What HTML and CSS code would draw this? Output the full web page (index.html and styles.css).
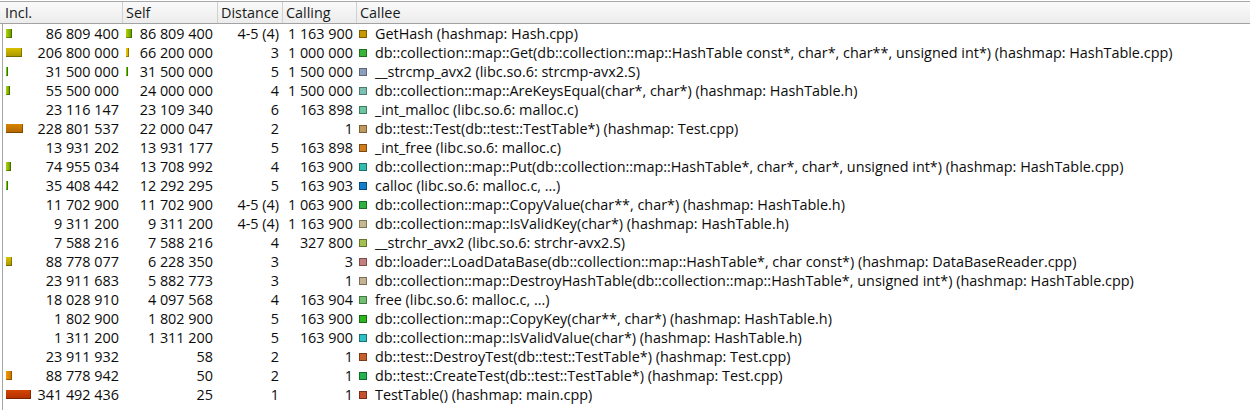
FILE: index.html
```html
<!DOCTYPE html>
<html>
<head>
<meta charset="utf-8">
<link rel="stylesheet" href="styles.css">
</head>
<body>
<div class="view">
  <div class="head">
    <div class="hc hc-incl">Incl.</div>
    <div class="hc">Self</div>
    <div class="hc">Distance</div>
    <div class="hc">Calling</div>
    <div class="hc">Callee</div>
  </div>
  <div class="rows">
    <div class="row">
      <div class="c incl"><span class="bar b-yg" style="width:6px"></span><span class="n">86 809 400</span></div>
      <div class="c self"><span class="bar b-yg" style="width:6px"></span><span class="n">86 809 400</span></div>
      <div class="c dist">4-5 (4)</div>
      <div class="c call">1 163 900</div>
      <div class="c callee"><span class="sq" style="background:#c49a00;border-color:#7a5f00"></span>GetHash (hashmap: Hash.cpp)</div>
    </div>
    <div class="row">
      <div class="c incl"><span class="bar b-ol" style="width:16px"></span><span class="n">206 800 000</span></div>
      <div class="c self"><span class="bar b-ye" style="width:3px"></span><span class="n">66 200 000</span></div>
      <div class="c dist">3</div>
      <div class="c call">1 000 000</div>
      <div class="c callee"><span class="sq" style="background:#3cb43c;border-color:#1e6e1e"></span>db::collection::map::Get(db::collection::map::HashTable const*, char*, char**, unsigned int*) (hashmap: HashTable.cpp)</div>
    </div>
    <div class="row">
      <div class="c incl"><span class="bar b-gr" style="width:2px"></span><span class="n">31 500 000</span></div>
      <div class="c self"><span class="bar b-gr" style="width:2px"></span><span class="n">31 500 000</span></div>
      <div class="c dist">5</div>
      <div class="c call">1 500 000</div>
      <div class="c callee"><span class="sq" style="background:#8ca0bc;border-color:#5a6678"></span>__strcmp_avx2 (libc.so.6: strcmp-avx2.S)</div>
    </div>
    <div class="row">
      <div class="c incl"><span class="bar b-yg" style="width:4px"></span><span class="n">55 500 000</span></div>
      <div class="c self"><span class="n">24 000 000</span></div>
      <div class="c dist">4</div>
      <div class="c call">1 500 000</div>
      <div class="c callee"><span class="sq" style="background:#7cc0b2;border-color:#4c7a70"></span>db::collection::map::AreKeysEqual(char*, char*) (hashmap: HashTable.h)</div>
    </div>
    <div class="row">
      <div class="c incl"><span class="n">23 116 147</span></div>
      <div class="c self"><span class="n">23 109 340</span></div>
      <div class="c dist">6</div>
      <div class="c call">163 898</div>
      <div class="c callee"><span class="sq" style="background:#6cc4a0;border-color:#3f7a62"></span>_int_malloc (libc.so.6: malloc.c)</div>
    </div>
    <div class="row">
      <div class="c incl"><span class="bar b-or" style="width:17px"></span><span class="n">228 801 537</span></div>
      <div class="c self"><span class="n">22 000 047</span></div>
      <div class="c dist">2</div>
      <div class="c call">1</div>
      <div class="c callee"><span class="sq" style="background:#c09a5c;border-color:#7a5f36"></span>db::test::Test(db::test::TestTable*) (hashmap: Test.cpp)</div>
    </div>
    <div class="row">
      <div class="c incl"><span class="n">13 931 202</span></div>
      <div class="c self"><span class="n">13 931 177</span></div>
      <div class="c dist">5</div>
      <div class="c call">163 898</div>
      <div class="c callee"><span class="sq" style="background:#d07c1c;border-color:#7e4a10"></span>_int_free (libc.so.6: malloc.c)</div>
    </div>
    <div class="row">
      <div class="c incl"><span class="bar b-yg" style="width:5px"></span><span class="n">74 955 034</span></div>
      <div class="c self"><span class="n">13 708 992</span></div>
      <div class="c dist">4</div>
      <div class="c call">163 900</div>
      <div class="c callee"><span class="sq" style="background:#32bcae;border-color:#1c7068"></span>db::collection::map::Put(db::collection::map::HashTable*, char*, char*, unsigned int*) (hashmap: HashTable.cpp)</div>
    </div>
    <div class="row">
      <div class="c incl"><span class="bar b-gr" style="width:2px"></span><span class="n">35 408 442</span></div>
      <div class="c self"><span class="n">12 292 295</span></div>
      <div class="c dist">5</div>
      <div class="c call">163 903</div>
      <div class="c callee"><span class="sq" style="background:#1480cc;border-color:#0a4a7a"></span>calloc (libc.so.6: malloc.c, ...)</div>
    </div>
    <div class="row">
      <div class="c incl"><span class="n">11 702 900</span></div>
      <div class="c self"><span class="n">11 702 900</span></div>
      <div class="c dist">4-5 (4)</div>
      <div class="c call">1 063 900</div>
      <div class="c callee"><span class="sq" style="background:#30b040;border-color:#1a6a24"></span>db::collection::map::CopyValue(char**, char*) (hashmap: HashTable.h)</div>
    </div>
    <div class="row">
      <div class="c incl"><span class="n">9 311 200</span></div>
      <div class="c self"><span class="n">9 311 200</span></div>
      <div class="c dist">4-5 (4)</div>
      <div class="c call">1 163 900</div>
      <div class="c callee"><span class="sq" style="background:#c2ba90;border-color:#7a7458"></span>db::collection::map::IsValidKey(char*) (hashmap: HashTable.h)</div>
    </div>
    <div class="row">
      <div class="c incl"><span class="n">7 588 216</span></div>
      <div class="c self"><span class="n">7 588 216</span></div>
      <div class="c dist">4</div>
      <div class="c call">327 800</div>
      <div class="c callee"><span class="sq" style="background:#a4c050;border-color:#62742e"></span>__strchr_avx2 (libc.so.6: strchr-avx2.S)</div>
    </div>
    <div class="row">
      <div class="c incl"><span class="bar b-ol" style="width:6px"></span><span class="n">88 778 077</span></div>
      <div class="c self"><span class="n">6 228 350</span></div>
      <div class="c dist">3</div>
      <div class="c call">3</div>
      <div class="c callee"><span class="sq" style="background:#c48080;border-color:#7a4c4c"></span>db::loader::LoadDataBase(db::collection::map::HashTable*, char const*) (hashmap: DataBaseReader.cpp)</div>
    </div>
    <div class="row">
      <div class="c incl"><span class="n">23 911 683</span></div>
      <div class="c self"><span class="n">5 882 773</span></div>
      <div class="c dist">3</div>
      <div class="c call">1</div>
      <div class="c callee"><span class="sq" style="background:#c2b494;border-color:#7a705a"></span>db::collection::map::DestroyHashTable(db::collection::map::HashTable*, unsigned int*) (hashmap: HashTable.cpp)</div>
    </div>
    <div class="row">
      <div class="c incl"><span class="n">18 028 910</span></div>
      <div class="c self"><span class="n">4 097 568</span></div>
      <div class="c dist">4</div>
      <div class="c call">163 904</div>
      <div class="c callee"><span class="sq" style="background:#70c070;border-color:#447844"></span>free (libc.so.6: malloc.c, ...)</div>
    </div>
    <div class="row">
      <div class="c incl"><span class="n">1 802 900</span></div>
      <div class="c self"><span class="n">1 802 900</span></div>
      <div class="c dist">5</div>
      <div class="c call">163 900</div>
      <div class="c callee"><span class="sq" style="background:#2eb41e;border-color:#186a10"></span>db::collection::map::CopyKey(char**, char*) (hashmap: HashTable.h)</div>
    </div>
    <div class="row">
      <div class="c incl"><span class="n">1 311 200</span></div>
      <div class="c self"><span class="n">1 311 200</span></div>
      <div class="c dist">5</div>
      <div class="c call">163 900</div>
      <div class="c callee"><span class="sq" style="background:#2ec0c4;border-color:#1a7276"></span>db::collection::map::IsValidValue(char*) (hashmap: HashTable.h)</div>
    </div>
    <div class="row">
      <div class="c incl"><span class="n">23 911 932</span></div>
      <div class="c self"><span class="n">58</span></div>
      <div class="c dist">2</div>
      <div class="c call">1</div>
      <div class="c callee"><span class="sq" style="background:#c4602c;border-color:#7a3a18"></span>db::test::DestroyTest(db::test::TestTable*) (hashmap: Test.cpp)</div>
    </div>
    <div class="row">
      <div class="c incl"><span class="bar b-org" style="width:6px"></span><span class="n">88 778 942</span></div>
      <div class="c self"><span class="n">50</span></div>
      <div class="c dist">2</div>
      <div class="c call">1</div>
      <div class="c callee"><span class="sq" style="background:#22b450;border-color:#126a2e"></span>db::test::CreateTest(db::test::TestTable*) (hashmap: Test.cpp)</div>
    </div>
    <div class="row">
      <div class="c incl"><span class="bar b-red" style="width:25px"></span><span class="n">341 492 436</span></div>
      <div class="c self"><span class="n">25</span></div>
      <div class="c dist">1</div>
      <div class="c call">1</div>
      <div class="c callee"><span class="sq" style="background:#c4502e;border-color:#7a2e1a"></span>TestTable() (hashmap: main.cpp)</div>
    </div>
  </div>
</div>
</body>
</html>
```

FILE: styles.css
```css
html, body {
  margin: 0;
  padding: 0;
  background: #ffffff;
}

body {
  font-family: "Open Sans", "Liberation Sans", sans-serif;
  font-size: 14.4px;
  color: #0c0c0c;
  width: 1250px;
  height: 410px;
  overflow: hidden;
}

.view {
  margin-top: 1px;
  border-top: 1px solid #a8a8a8;
}

.head {
  display: grid;
  grid-template-columns: 122px 95px 65px 74px 1fr;
  height: 21px;
  background: linear-gradient(#fafafa, #ececec);
  border-bottom: 1px solid #a2a2a2;
}

.hc {
  display: flex;
  align-items: center;
  padding-left: 3px;
  border-left: 1px solid #d0d0d0;
  color: #1a1a1a;
  line-height: 21px;
  white-space: nowrap;
  overflow: hidden;
}

.hc-incl {
  border-left: none;
  padding-left: 5px;
}

.rows {
  margin-left: 2px;
  border-left: 1px solid #a6a6a6;
  height: 390px;
}

.row {
  display: grid;
  grid-template-columns: 119px 95px 65px 74px 1fr;
  height: 19px;
}

.c {
  display: flex;
  align-items: center;
  white-space: nowrap;
  line-height: 19px;
}

.incl, .self {
  justify-content: space-between;
}

.incl {
  padding-left: 3px;
  padding-right: 3px;
}

.self {
  padding-left: 4px;
  padding-right: 4px;
}

.n {
  margin-left: auto;
}

.dist, .call {
  justify-content: flex-end;
  padding-right: 3px;
}

.callee {
  padding-left: 3px;
  overflow: hidden;
}

.sq {
  box-sizing: border-box;
  width: 8px;
  height: 8px;
  border: 1px solid #555;
  margin-right: 8px;
  flex: none;
}

.bar {
  height: 9px;
  flex: none;
  box-shadow: inset -1px -1px 0 rgba(0, 0, 0, 0.3);
}

.b-yg  { background: linear-gradient(to right, #b4d400, #5c9400); }
.b-gr  { background: linear-gradient(to right, #7ad400, #40a000); }
.b-ol  { background: linear-gradient(#d6c000, #a89400); }
.b-ye  { background: linear-gradient(to right, #f0cc00, #c8a000); }
.b-or  { background: linear-gradient(#d88400, #b06600); }
.b-org { background: linear-gradient(to right, #f09a00, #c87000); }
.b-red { background: linear-gradient(#d44400, #b02e00); }
```
